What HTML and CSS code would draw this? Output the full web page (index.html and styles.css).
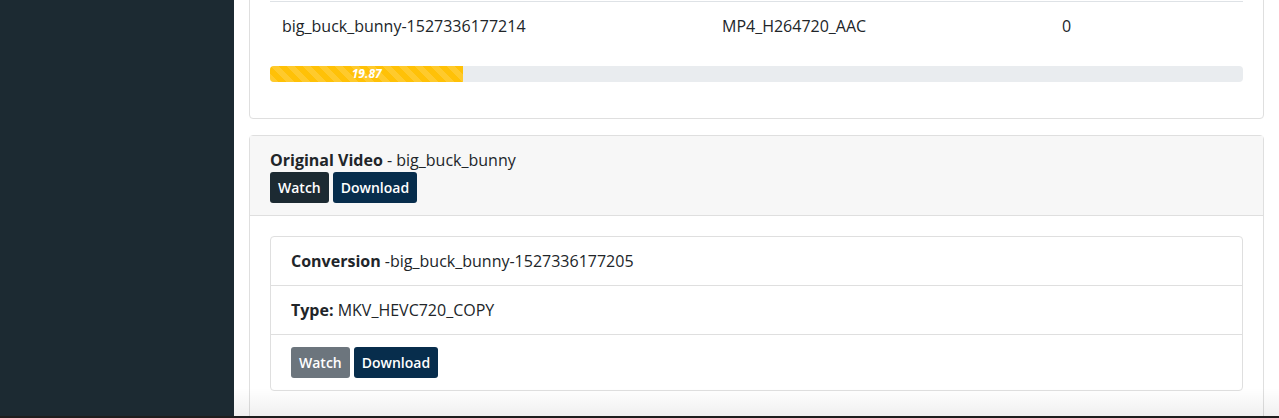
FILE: index.html
```html
<!DOCTYPE html>
<html>
<head>
<meta charset="utf-8">
<link rel="stylesheet" href="styles.css">
</head>
<body>
<div class="app">
  <aside class="sidebar"></aside>
  <main class="content">
    <section class="card card-first">
      <div class="card-body">
        <table class="table">
          <tbody>
            <tr>
              <td class="c1">big_buck_bunny-1527336177214</td>
              <td class="c2">MP4_H264720_AAC</td>
              <td class="c3">0</td>
            </tr>
          </tbody>
        </table>
        <div class="progress">
          <div class="progress-bar" style="width: 19.87%">19.87</div>
        </div>
      </div>
    </section>
    <section class="card card-second">
      <div class="card-header">
        <div class="line"><strong>Original Video</strong> - big_buck_bunny</div>
        <div class="btns">
          <span class="btn btn-dark">Watch</span>
          <span class="btn btn-navy">Download</span>
        </div>
      </div>
      <div class="card-body">
        <ul class="list-group">
          <li class="list-item"><strong>Conversion</strong> -big_buck_bunny-1527336177205</li>
          <li class="list-item"><strong>Type:</strong> MKV_HEVC720_COPY</li>
          <li class="list-item btns">
            <span class="btn btn-grey">Watch</span>
            <span class="btn btn-navy">Download</span>
          </li>
        </ul>
      </div>
    </section>
    <div class="shade"></div>
  </main>
</div>
<div class="bottom-line"></div>
</body>
</html>
```

FILE: styles.css
```css
* { box-sizing: border-box; }
html, body {
  margin: 0;
  padding: 0;
  height: 418px;
  overflow: hidden;
  background: #ffffff;
}
body {
  font-family: "Open Sans", "Liberation Sans", sans-serif;
  font-size: 16px;
  line-height: 24px;
  color: #212529;
  display: flex;
  flex-direction: column;
}
.app {
  display: flex;
  height: 416px;
  overflow: hidden;
}
.sidebar {
  width: 234px;
  flex: 0 0 234px;
  background: #1c2a32;
}
.content {
  flex: 1;
  padding: 0 15px 40px;
  position: relative;
  overflow: hidden;
}
.card {
  border: 1px solid #dfdfdf;
  border-radius: 4px;
  background: #fff;
}
.card-first {
  margin-top: -20px;
  margin-bottom: 16px;
}
.card-body {
  padding: 20px;
}
.table {
  width: 100%;
  border-collapse: collapse;
  margin-bottom: 16px;
}
.table td {
  border-top: 1px solid #dee2e6;
  padding: 12px;
  vertical-align: top;
}
.c1 { width: 440px; }
.c2 { width: 340px; }
.progress {
  height: 16px;
  background: #e9ecef;
  border-radius: 4px;
  overflow: hidden;
  display: flex;
  margin-bottom: 16px;
}
.progress-bar {
  background-color: #ffc107;
  background-image: linear-gradient(45deg, rgba(255,255,255,.15) 25%, transparent 25%, transparent 50%, rgba(255,255,255,.15) 50%, rgba(255,255,255,.15) 75%, transparent 75%, transparent);
  background-size: 16px 16px;
  color: #fff;
  font-size: 12px;
  font-weight: 700;
  font-style: italic;
  line-height: 16px;
  text-align: center;
}
.card-second {
  padding-bottom: 60px;
}
.card-header {
  background: #f7f7f7;
  padding: 12px 20px;
  border-bottom: 1px solid #dfdfdf;
}
.btns {
  display: flex;
  gap: 4px;
}
.btn {
  display: inline-block;
  font-size: 14px;
  font-weight: 600;
  line-height: 21px;
  padding: 4px 7px;
  border: 1px solid transparent;
  border-radius: 3px;
  color: #fff;
}
.btn-dark { background: #1c2a32; }
.btn-navy { background: #072d4c; }
.btn-grey { background: #6c757d; }
.list-group {
  list-style: none;
  margin: 0;
  padding: 0;
  border: 1px solid #dfdfdf;
  border-radius: 4px;
}
.list-item {
  padding: 12px 20px;
}
.list-item + .list-item {
  border-top: 1px solid #dfdfdf;
}
.shade {
  position: absolute;
  left: 0;
  right: 0;
  bottom: 0;
  height: 28px;
  background: linear-gradient(to bottom, rgba(0,0,0,0), rgba(0,0,0,0.06));
  pointer-events: none;
}
.bottom-line {
  height: 2px;
  background: #1e1e1e;
}
```
